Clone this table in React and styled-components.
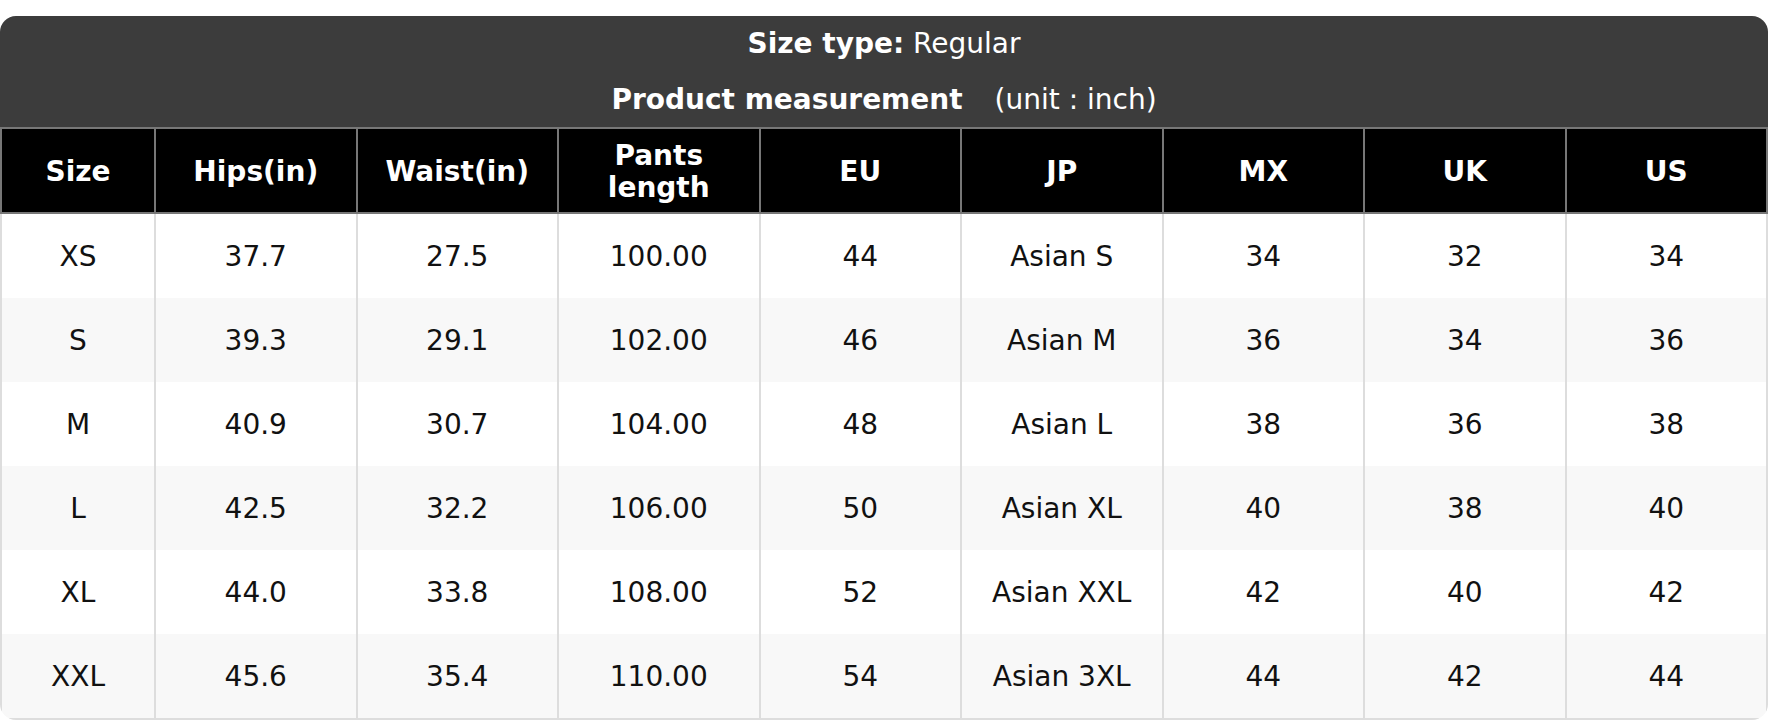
import React from "react";
import styled, { createGlobalStyle } from "styled-components";

const rows = [
  ["XS", "37.7", "27.5", "100.00", "44", "Asian S", "34", "32", "34"],
  ["S", "39.3", "29.1", "102.00", "46", "Asian M", "36", "34", "36"],
  ["M", "40.9", "30.7", "104.00", "48", "Asian L", "38", "36", "38"],
  ["L", "42.5", "32.2", "106.00", "50", "Asian XL", "40", "38", "40"],
  ["XL", "44.0", "33.8", "108.00", "52", "Asian XXL", "42", "40", "42"],
  ["XXL", "45.6", "35.4", "110.00", "54", "Asian 3XL", "44", "42", "44"],
];

const headers = ["Size", "Hips(in)", "Waist(in)", "Pants length", "EU", "JP", "MX", "UK", "US"];

export default () => (
  <>
    <GlobalStyle />
    <Page>
      <Card>
        <Caption>
          <Line>
            <b>Size type:</b> Regular
          </Line>
          <Line $offset={1}>
            <b>Product measurement</b>
            <Unit>(unit : inch)</Unit>
          </Line>
        </Caption>
        <Table>
          <colgroup>
            <col style={{ width: 154 }} />
            {headers.slice(1).map((h) => (
              <col key={h} />
            ))}
          </colgroup>
          <thead>
            <tr>
              {headers.map((h) => (
                <Th key={h}>{h === "Pants length" ? <>Pants<br />length</> : h}</Th>
              ))}
            </tr>
          </thead>
          <tbody>
            {rows.map((r, i) => (
              <Row key={r[0]} $striped={i % 2 === 1}>
                {r.map((c, j) => (
                  <Td key={j}>{c}</Td>
                ))}
              </Row>
            ))}
          </tbody>
        </Table>
      </Card>
    </Page>
  </>
);

const GlobalStyle = createGlobalStyle`
  body {
    margin: 0;
    background: #fff;
    font-family: "DejaVu Sans", "Liberation Sans", sans-serif;
  }
`;

const Page = styled.div`
  padding: 16px 2px 0 0;
`;

const Card = styled.div`
  border-radius: 16px;
  overflow: hidden;
  background: #fff;
`;

const Caption = styled.div`
  background: #3c3c3c;
  color: #fff;
  text-align: center;
  font-size: 28px;
  height: 111px;
`;

const Line = styled.div`
  line-height: 56px;
  height: 55px;
  padding-top: ${(p) => p.$offset || 0}px;
  box-sizing: border-box;
  b {
    font-weight: bold;
  }
`;

const Unit = styled.span`
  margin-left: 32px;
`;

const Table = styled.table`
  width: 100%;
  table-layout: fixed;
  border-collapse: collapse;
  font-size: 28px;
  text-align: center;
`;

const Th = styled.th`
  background: #000;
  color: #fff;
  font-weight: bold;
  height: 80px;
  padding: 3px 0 0;
  line-height: 32px;
  border: 2px solid #777;
`;

const Row = styled.tr`
  background: ${(p) => (p.$striped ? "#f8f8f8" : "#fff")};
`;

const Td = styled.td`
  height: 84px;
  padding: 0;
  color: #111;
  border-left: 2px solid #ddd;
  border-right: 2px solid #ddd;
  tr:last-child > & {
    border-bottom: 2px solid #ddd;
  }
`;
